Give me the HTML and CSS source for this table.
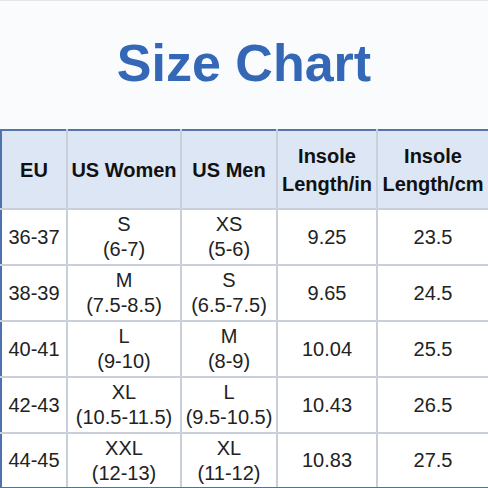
FILE: index.html
```html
<!DOCTYPE html>
<html lang="en">
<head>
<meta charset="UTF-8">
<title>Size Chart</title>
<link rel="stylesheet" href="styles.css">
</head>
<body>
	<div class="chart">
		<h1 class="title">Size Chart</h1>
		<table class="sizes">
			<colgroup>
				<col class="c-eu">
				<col class="c-women">
				<col class="c-men">
				<col class="c-in">
				<col class="c-cm">
			</colgroup>
			<tr class="head">
				<th>EU</th>
				<th>US Women</th>
				<th>US Men</th>
				<th>Insole<br>Length/in</th>
				<th>Insole<br>Length/cm</th>
			</tr>
			<tr>
				<td>36-37</td>
				<td>S<br>(6-7)</td>
				<td>XS<br>(5-6)</td>
				<td>9.25</td>
				<td>23.5</td>
			</tr>
			<tr>
				<td>38-39</td>
				<td>M<br>(7.5-8.5)</td>
				<td>S<br>(6.5-7.5)</td>
				<td>9.65</td>
				<td>24.5</td>
			</tr>
			<tr>
				<td>40-41</td>
				<td>L<br>(9-10)</td>
				<td>M<br>(8-9)</td>
				<td>10.04</td>
				<td>25.5</td>
			</tr>
			<tr>
				<td>42-43</td>
				<td>XL<br>(10.5-11.5)</td>
				<td>L<br>(9.5-10.5)</td>
				<td>10.43</td>
				<td>26.5</td>
			</tr>
			<tr class="last">
				<td>44-45</td>
				<td>XXL<br>(12-13)</td>
				<td>XL<br>(11-12)</td>
				<td>10.83</td>
				<td>27.5</td>
			</tr>
		</table>
	</div>
</body>
</html>
```

FILE: styles.css
```css
html,body{margin: 0;padding: 0;background-color: #fafbfd;}
.chart{
	width: 488px;
	height: 488px;
	font-family: "Liberation Sans", Arial, sans-serif;
	color: #1c1c1c;
	border-top: 1px solid #e4e6ea;
	box-sizing: border-box;
}
.title{
	margin: 0;
	height: 128px;
	display: flex;
	align-items: center;
	justify-content: center;
	font-size: 52px;
	font-weight: bold;
	color: #3468b7;
	padding-bottom: 4px;
	box-sizing: border-box;
}
.sizes{
	width: 488px;
	table-layout: fixed;
	border-collapse: collapse;
	border: 2px solid #5576a8;
	background-color: #fff;
}
.c-eu{width: 66px;}
.c-women{width: 114px;}
.c-men{width: 96px;}
.c-in{width: 100px;}
.c-cm{width: 112px;}
.sizes th,.sizes td{
	padding: 0;
	text-align: center;
	border: 2px solid #c9d0da;
	white-space: nowrap;
	overflow: hidden;
}
.sizes th{
	height: 77px;
	background-color: #dce6f4;
	font-size: 20px;
	line-height: 28px;
	font-weight: bold;
	color: #111;
	border-top: 2px solid #5576a8;
}
.sizes td{
	height: 54px;
	font-size: 20px;
	line-height: 25px;
	color: #222;
}
.sizes th:first-child,.sizes td:first-child{border-left: 2px solid #4d72ad;}
.sizes th:last-child,.sizes td:last-child{border-right: 2px solid #4d72ad;}
.sizes .last td{height: 53px;border-bottom: 2px solid #4d72ad;}
```
